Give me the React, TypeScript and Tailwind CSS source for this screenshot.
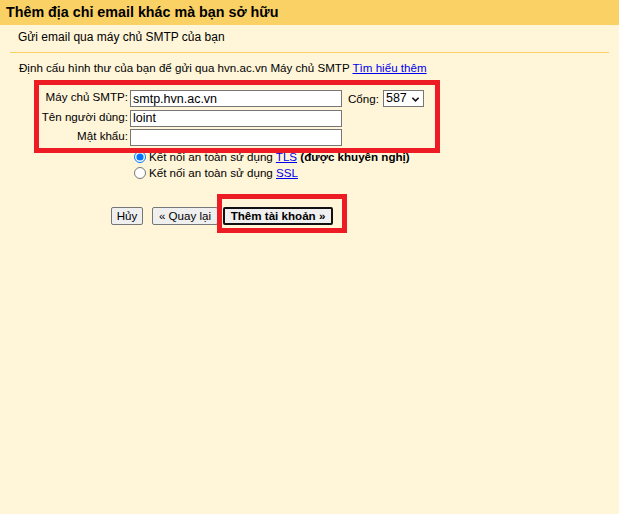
import React from 'react'

const FONT = "font-['Liberation_Sans',Arial,sans-serif]"

function FieldRow({ label, value, children }: { label: string; value: string; children?: React.ReactNode }) {
  return (
    <div className="flex h-[19.5px] items-start">
      <label className="w-[98px] whitespace-nowrap pr-[2px] text-right leading-[14px]">{label}</label>
      <input
        readOnly
        value={value}
        className="h-[17px] w-[212px] border border-[#767676] bg-white px-[2px] text-[12.5px] leading-[15px] outline-none"
      />
      {children}
    </div>
  )
}

export default function App() {
  return (
    <div className={`relative h-[514px] w-[619px] overflow-hidden bg-[#fff5d9] text-[11.6px] text-black ${FONT}`}>
      <div className="h-[25px] bg-[#fad165] pl-[6px] text-[14.3px] font-bold leading-[25px]">
        Thêm địa chỉ email khác mà bạn sở hữu
      </div>

      <div className="mx-[10px] h-[28px] border-b border-[#fad165] pl-[8px] pt-[5px] text-[12px] leading-[15px]">
        Gửi email qua máy chủ SMTP của bạn
      </div>

      <p className="mt-[7px] whitespace-nowrap pl-[19px] leading-[15px]">
        Định cấu hình thư của bạn để gửi qua hvn.ac.vn Máy chủ SMTP{' '}
        <a href="#" className="text-[#0000ee] underline">Tìm hiểu thêm</a>
      </p>

      <div className="mt-[15px] pl-[32px]">
        <FieldRow label="Máy chủ SMTP:" value="smtp.hvn.ac.vn">
          <span className="ml-[6px] leading-[18px]">Cổng:</span>
          <div className="relative ml-[4px] flex h-[17px] w-[41px] items-center border border-[#767676] bg-white pl-[2px]">
            <span className="text-[12.5px] leading-[15px]">587</span>
            <svg viewBox="0 0 10 10" className="absolute right-[3px] top-[4px] h-[9px] w-[9px]">
              <path d="M1.5 3 L5 6.5 L8.5 3" fill="none" stroke="#111" strokeWidth="1.8" />
            </svg>
          </div>
        </FieldRow>
        <FieldRow label="Tên người dùng:" value="loint" />
        <FieldRow label="Mật khẩu:" value="" />
      </div>

      <div className="pl-[134px]">
        <label className="flex h-[16px] items-center whitespace-nowrap">
          <input type="radio" name="sec" defaultChecked className="m-0 h-[12px] w-[12px]" />
          <span className="ml-[3px] leading-[15px]">
            Kết nối an toàn sử dụng <a href="#" className="text-[#0000ee] underline">TLS</a>{' '}
            <b>(được khuyên nghị)</b>
          </span>
        </label>
        <label className="flex h-[16px] items-center whitespace-nowrap">
          <input type="radio" name="sec" className="m-0 h-[12px] w-[12px]" />
          <span className="ml-[3px] leading-[15px]">
            Kết nối an toàn sử dụng <a href="#" className="text-[#0000ee] underline">SSL</a>
          </span>
        </label>
      </div>

      <div className="mt-[26px] flex items-center whitespace-nowrap pl-[111px]">
        <button className="h-[18px] w-[32px] rounded-[2px] border border-[#767676] bg-[#efefef] leading-[15px]">Hủy</button>
        <button className="ml-[9px] h-[18px] w-[66px] rounded-[2px] border border-[#767676] bg-[#efefef] leading-[15px]">
          « Quay lại
        </button>
        <button className="ml-[5px] h-[18px] w-[110px] rounded-[2px] border-2 border-[#111] bg-[#efefef] font-bold leading-[14px]">
          Thêm tài khoản »
        </button>
      </div>

      <div className="pointer-events-none absolute left-[34px] top-[80px] h-[73px] w-[406px] border-[5px] border-[#ed1c24]" />
      <div className="pointer-events-none absolute left-[217px] top-[194px] h-[39px] w-[130px] border-[5px] border-[#ed1c24]" />
    </div>
  )
}
